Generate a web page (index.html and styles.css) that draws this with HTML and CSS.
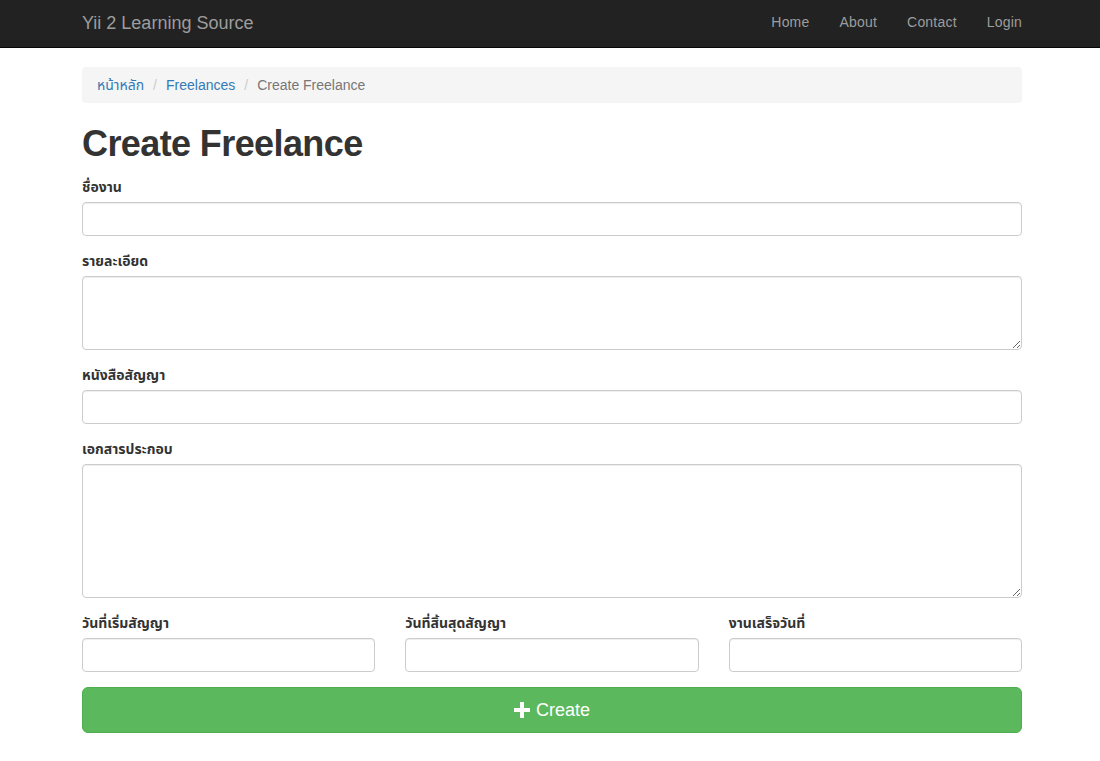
FILE: index.html
```html
<!DOCTYPE html>
<html lang="th">
<head>
<meta charset="utf-8">
<title>Create Freelance</title>
<link rel="stylesheet" href="styles.css">
</head>
<body>
<nav class="navbar">
  <div class="container nav-inner">
    <a class="brand" href="#">Yii 2 Learning Source</a>
    <ul class="nav">
      <li><a href="#">Home</a></li>
      <li><a href="#">About</a></li>
      <li><a href="#">Contact</a></li>
      <li><a href="#">Login</a></li>
    </ul>
  </div>
</nav>
<main class="container main">
  <ul class="breadcrumb">
    <li><a href="#">หน้าหลัก</a></li>
    <li><a href="#">Freelances</a></li>
    <li class="active">Create Freelance</li>
  </ul>
  <h1 class="title">Create Freelance</h1>
  <form class="form">
    <div class="form-group">
      <label class="label">ชื่องาน</label>
      <input class="control" type="text">
    </div>
    <div class="form-group">
      <label class="label">รายละเอียด</label>
      <textarea class="control area-sm"></textarea>
    </div>
    <div class="form-group">
      <label class="label">หนังสือสัญญา</label>
      <input class="control" type="text">
    </div>
    <div class="form-group">
      <label class="label">เอกสารประกอบ</label>
      <textarea class="control area-lg"></textarea>
    </div>
    <div class="row">
      <div class="form-group col">
        <label class="label">วันที่เริ่มสัญญา</label>
        <input class="control" type="text">
      </div>
      <div class="form-group col">
        <label class="label">วันที่สิ้นสุดสัญญา</label>
        <input class="control" type="text">
      </div>
      <div class="form-group col">
        <label class="label">งานเสร็จวันที่</label>
        <input class="control" type="text">
      </div>
    </div>
    <button type="button" class="btn-create">
      <svg class="plus" width="16" height="16" viewBox="0 0 16 16" aria-hidden="true"><path d="M6 0h4v6h6v4h-6v6h-4v-6h-6v-4h6z" fill="#fff"/></svg>
      <span>Create</span>
    </button>
  </form>
</main>
</body>
</html>
```
FILE: styles.css
```css
* { box-sizing: border-box; }
html, body { margin: 0; padding: 0; }
body {
  font-family: "Liberation Sans", Arial, "Noto Sans Thai", "Tlwg Typist", sans-serif;
  font-size: 14px;
  line-height: 1.42857;
  color: #333;
  background: #fff;
}
a { text-decoration: none; }
.container {
  width: 940px;
  margin-left: calc(50% - 468px);
}
.navbar {
  background: #222;
  border-bottom: 1px solid #080808;
  height: 48px;
}
.nav-inner {
  display: flex;
  justify-content: space-between;
  align-items: center;
  height: 45px;
}
.brand {
  color: #9d9d9d;
  font-size: 18px;
  line-height: 20px;
}
.nav {
  list-style: none;
  margin: 0 -15px 0 0;
  padding: 0;
  display: flex;
}
.nav a {
  display: block;
  padding: 12px 15px 13px;
  line-height: 20px;
  color: #9d9d9d;
  letter-spacing: 0.2px;
}
.main { padding-top: 19px; }
.breadcrumb {
  list-style: none;
  margin: 0 0 21px;
  padding: 9px 15px 7px;
  background: #f5f5f5;
  border-radius: 4px;
  display: flex;
  height: 36px;
  align-items: center;
}
.breadcrumb li + li::before {
  content: "/";
  color: #ccc;
  padding: 0 9px 0 9px;
}
.breadcrumb a { color: #337ab7; }
.breadcrumb .active { color: #777; }
.title {
  font-size: 36px;
  font-weight: bold;
  letter-spacing: -0.6px;
  line-height: 40px;
  margin: 0 0 13px;
  color: #333;
}
.form-group { margin-bottom: 15px; }
.label {
  display: block;
  font-weight: bold;
  margin-bottom: 5px;
  height: 20px;
  line-height: 20px;
}
.control {
  display: block;
  width: 100%;
  height: 34px;
  padding: 6px 12px;
  font: inherit;
  color: #555;
  background: #fff;
  border: 1px solid #ccc;
  border-radius: 4px;
  box-shadow: inset 0 1px 1px rgba(0,0,0,.075);
  margin: 0;
}
textarea.control { resize: vertical; }
.area-sm { height: 74px; }
.area-lg { height: 134px; }
.row {
  display: grid;
  grid-template-columns: repeat(3, 1fr);
  column-gap: 30px;
}
.btn-create {
  width: 100%;
  height: 46px;
  display: flex;
  align-items: center;
  justify-content: center;
  gap: 6px;
  background: #5cb85c;
  border: 1px solid #4cae4c;
  border-radius: 6px;
  color: #fff;
  font-family: inherit;
  font-size: 18px;
  line-height: 24px;
  padding: 10px 16px;
  cursor: pointer;
}
.plus { display: block; }
```
